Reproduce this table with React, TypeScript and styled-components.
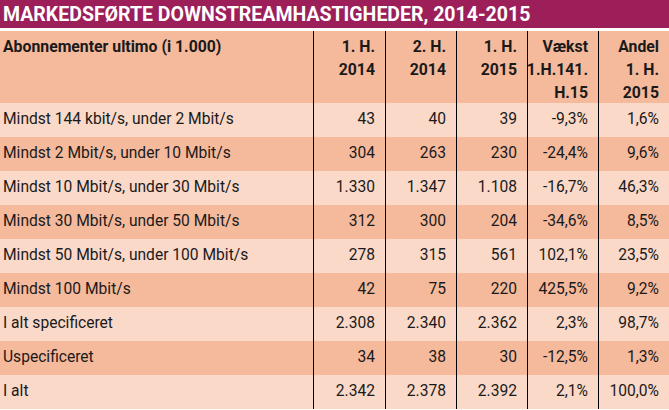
import styled, { createGlobalStyle } from "styled-components";

const GlobalStyle = createGlobalStyle`
  html, body {
    margin: 0;
    padding: 0;
    background: #ffffff;
  }
  body {
    font-family: "Roboto", "Liberation Sans", sans-serif;
    color: #1a1a1a;
  }
`;

type Row = {
  label: string;
  values: string[];
};

const rows: Row[] = [
  { label: "Mindst 144 kbit/s, under 2 Mbit/s", values: ["43", "40", "39", "-9,3%", "1,6%"] },
  { label: "Mindst 2 Mbit/s, under 10 Mbit/s", values: ["304", "263", "230", "-24,4%", "9,6%"] },
  { label: "Mindst 10 Mbit/s, under 30 Mbit/s", values: ["1.330", "1.347", "1.108", "-16,7%", "46,3%"] },
  { label: "Mindst 30 Mbit/s, under 50 Mbit/s", values: ["312", "300", "204", "-34,6%", "8,5%"] },
  { label: "Mindst 50 Mbit/s, under 100 Mbit/s", values: ["278", "315", "561", "102,1%", "23,5%"] },
  { label: "Mindst 100 Mbit/s", values: ["42", "75", "220", "425,5%", "9,2%"] },
  { label: "I alt specificeret", values: ["2.308", "2.340", "2.362", "2,3%", "98,7%"] },
  { label: "Uspecificeret", values: ["34", "38", "30", "-12,5%", "1,3%"] },
  { label: "I alt", values: ["2.342", "2.378", "2.392", "2,1%", "100,0%"] },
];

const headers = [
  ["1. H.", "2014"],
  ["2. H.", "2014"],
  ["1. H.", "2015"],
  ["Vækst", "1.H.141.", "H.15"],
  ["Andel", "1. H.", "2015"],
];

export default function App() {
  return (
    <>
      <GlobalStyle />
      <Page>
        <Title>MARKEDSFØRTE DOWNSTREAMHASTIGHEDER, 2014-2015</Title>
        <Table>
          <TableRow $tone="dark">
            <HeadCell>Abonnementer ultimo (i 1.000)</HeadCell>
            {headers.map((lines, i) => (
              <HeadCell key={i} $numeric>
                {lines.map((line) => (
                  <HeadLine key={line}>{line}</HeadLine>
                ))}
              </HeadCell>
            ))}
          </TableRow>
          {rows.map((row, i) => (
            <TableRow key={row.label} $tone={i % 2 === 0 ? "light" : "dark"}>
              <Cell>{row.label}</Cell>
              {row.values.map((v, j) => (
                <Cell key={j} $numeric>
                  {v}
                </Cell>
              ))}
            </TableRow>
          ))}
        </Table>
      </Page>
    </>
  );
}

const Page = styled.div`
  width: 669px;
  height: 410px;
  overflow: hidden;
  display: flex;
  flex-direction: column;
  gap: 3px;
`;

const Title = styled.div`
  height: 28px;
  background-color: #9c1f5a;
  color: #ffffff;
  font-weight: 700;
  font-size: 19.5px;
  line-height: 29px;
  padding-left: 3px;
  white-space: nowrap;
`;

const Table = styled.div`
  display: flex;
  flex-direction: column;
`;

const TableRow = styled.div<{ $tone: "dark" | "light" }>`
  display: grid;
  grid-template-columns: 313px 72px 71px 71px 71px 71px;
  min-height: 34px;
  background-color: ${(p) => (p.$tone === "dark" ? "#f5b99c" : "#fad9c9")};
`;

const Cell = styled.div<{ $numeric?: boolean }>`
  display: flex;
  align-items: center;
  justify-content: ${(p) => (p.$numeric ? "flex-end" : "flex-start")};
  padding: 0 ${(p) => (p.$numeric ? "10px" : "0")} 3px
    ${(p) => (p.$numeric ? "0" : "3px")};
  border-left: ${(p) => (p.$numeric ? "1px solid #000" : "none")};
  font-size: 15.6px;
  white-space: nowrap;
`;

const HeadCell = styled.div<{ $numeric?: boolean }>`
  display: flex;
  flex-direction: column;
  align-items: ${(p) => (p.$numeric ? "flex-end" : "flex-start")};
  height: 72px;
  padding: 4px ${(p) => (p.$numeric ? "10px" : "0")} 0
    ${(p) => (p.$numeric ? "0" : "3px")};
  box-sizing: border-box;
  border-left: ${(p) => (p.$numeric ? "1px solid #000" : "none")};
  font-size: 15.8px;
  font-weight: 700;
  line-height: 23px;
  white-space: nowrap;
`;

const HeadLine = styled.span`
  display: block;
`;
